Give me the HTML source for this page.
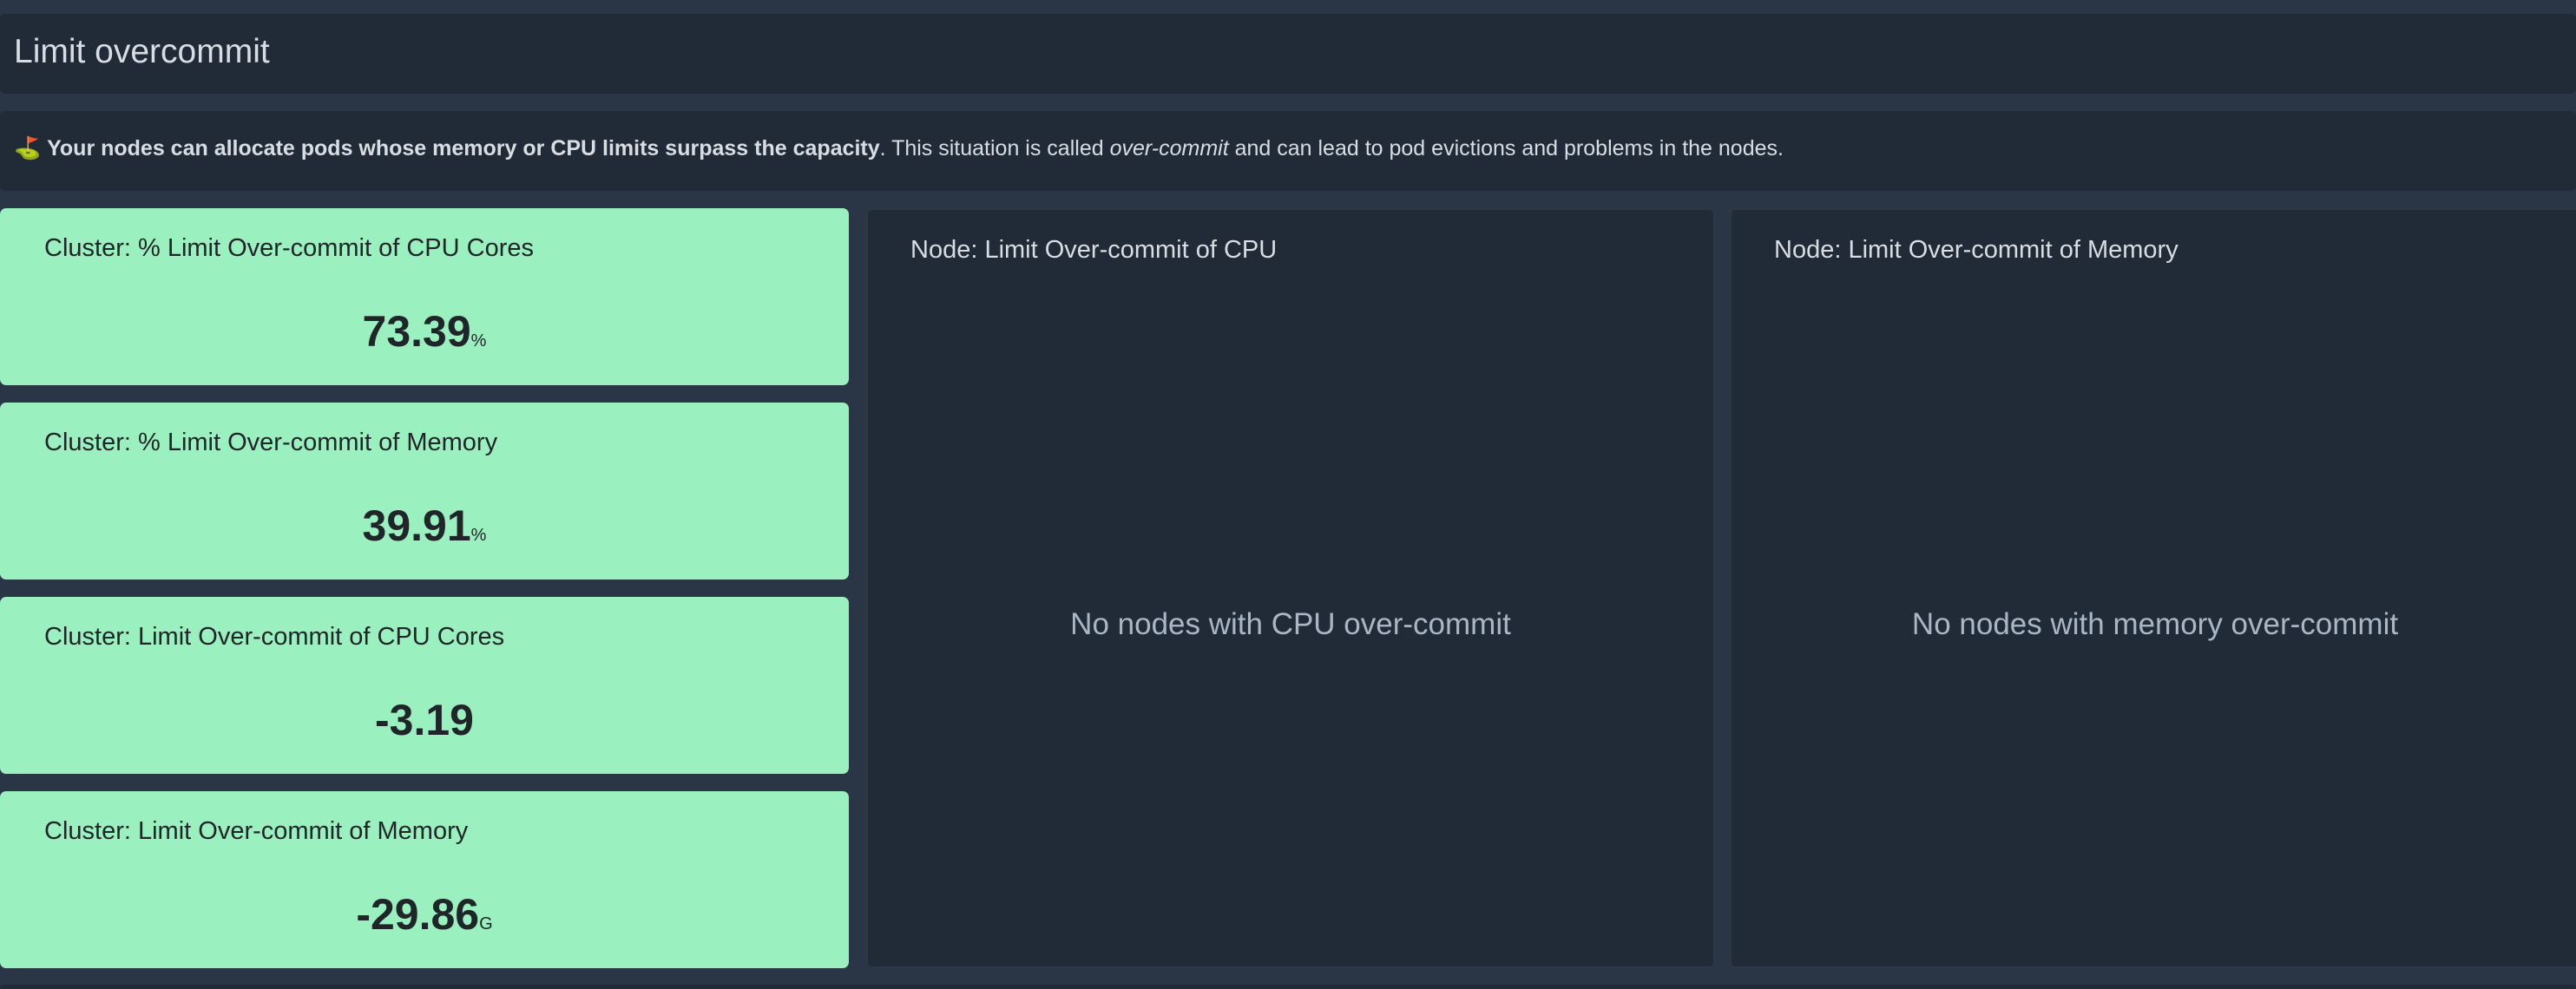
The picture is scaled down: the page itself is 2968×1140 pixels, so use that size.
<!DOCTYPE html>
<html><head><meta charset="utf-8"><style>
*{margin:0;padding:0;box-sizing:border-box}
html{width:2968px;height:1140px;overflow:hidden}
body{width:2968px;height:1140px;background:#2a3645;font-family:"Liberation Sans",sans-serif;position:relative;overflow:hidden}
.p{position:absolute;background:#212b38;border-radius:6px}
.h{left:0;top:16px;width:2968px;height:92px;color:#d8dde3;font-size:39px;padding:22px 0 0 16px}
.i{left:0;top:128px;width:2968px;height:92px;color:#d8dde3;font-size:25px;padding:29px 0 0 16px;white-space:nowrap}
.c{position:absolute;left:0;width:978px;height:204px;background:#9af0bf;border-radius:7px;color:#1f2529}
.c .t{position:absolute;left:51px;top:30px;font-size:29px}
.c .v{position:absolute;left:0;width:978px;top:113px;text-align:center;font-size:50px;font-weight:bold}
.c .v small{font-size:20px;font-weight:normal}
.n{top:240px;height:876px}
.n .t{position:absolute;left:49px;top:30px;font-size:29px;color:#d8dde3}
.n .e{position:absolute;left:0;right:0;top:458px;text-align:center;font-size:35px;font-weight:300;color:#a9b6c4}
</style></head><body>
<div class="p h">Limit overcommit</div>
<div class="p i">⛳ <b>Your nodes can allocate pods whose memory or CPU limits surpass the capacity</b>. This situation is called <i>over-commit</i> and can lead to pod evictions and problems in the nodes.</div>
<div class="c" style="top:240px"><div class="t">Cluster: % Limit Over-commit of CPU Cores</div><div class="v">73.39<small>%</small></div></div>
<div class="c" style="top:464px"><div class="t">Cluster: % Limit Over-commit of Memory</div><div class="v">39.91<small>%</small></div></div>
<div class="c" style="top:688px"><div class="t">Cluster: Limit Over-commit of CPU Cores</div><div class="v">-3.19</div></div>
<div class="c" style="top:912px"><div class="t">Cluster: Limit Over-commit of Memory</div><div class="v">-29.86<small>G</small></div></div>
<div class="p n" style="left:998px;width:978px;border:2px solid #2c3846"><div class="t">Node: Limit Over-commit of CPU</div><div class="e">No nodes with CPU over-commit</div></div>
<div class="p n" style="left:1993px;width:975px;border:2px solid #2c3846;border-right:none;border-radius:6px 0 0 6px"><div class="t">Node: Limit Over-commit of Memory</div><div class="e" style="right:-3px">No nodes with memory over-commit</div></div>
<div class="p" style="left:0;top:1135px;width:2968px;height:5px;border-radius:6px 6px 0 0"></div>
</body></html>
